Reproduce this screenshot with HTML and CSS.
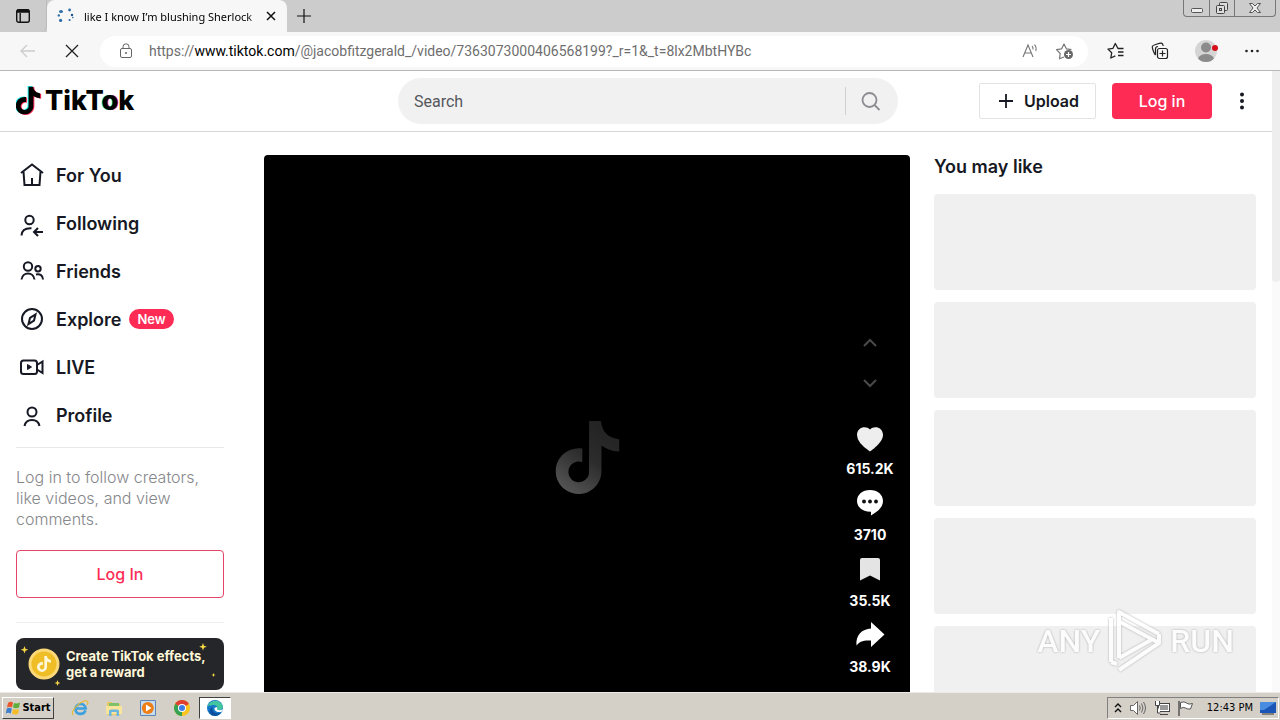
FILE: index.html
```html
<!DOCTYPE html>
<html lang="en">
<head>
<meta charset="utf-8">
<title>like I know I'm blushing Sherlock</title>
<link rel="stylesheet" href="styles.css">
</head>
<body>
<svg class="defs" aria-hidden="true">
  <symbol id="note" viewBox="0 0 24 24"><path d="M12.525.02c1.31-.02 2.61-.01 3.91-.02.08 1.53.63 3.09 1.75 4.17 1.12 1.11 2.7 1.62 4.24 1.79v4.03c-1.44-.05-2.89-.35-4.2-.97-.57-.26-1.1-.59-1.62-.93-.01 2.92.01 5.84-.02 8.75-.08 1.4-.54 2.79-1.35 3.94-1.31 1.92-3.58 3.17-5.91 3.21-1.43.08-2.86-.31-4.08-1.03-2.02-1.19-3.44-3.37-3.65-5.71-.02-.5-.03-1-.01-1.49.18-1.9 1.12-3.72 2.58-4.96 1.66-1.44 3.98-2.13 6.15-1.72.02 1.48-.04 2.96-.04 4.44-.99-.32-2.15-.23-3.02.37-.63.41-1.11 1.04-1.36 1.75-.21.51-.15 1.07-.14 1.61.24 1.64 1.82 3.02 3.5 2.87 1.12-.01 2.19-.66 2.77-1.61.19-.33.4-.67.41-1.06.1-1.79.06-3.57.07-5.36.01-4.03-.01-8.05.02-12.07z"/></symbol>
</svg>

<div class="tabstrip">
  <button class="tab-menu" aria-label="Tab actions">
    <svg width="16" height="16" viewBox="0 0 16 16" fill="none" stroke="#111" stroke-width="1.4"><rect x="1.7" y="1.7" width="12.6" height="12.6" rx="2"/><path d="M2 3.6h12M2 2.6h12" stroke-width="2.4"/><path d="M5.2 5v9"/></svg>
  </button>
  <div class="tab">
    <svg width="18" height="18" viewBox="0 0 18 18" fill="#2f6fa8"><ellipse cx="4" cy="4.5" rx="2" ry="1.5"/><circle cx="1.8" cy="8.4" r="1.2"/><circle cx="3.6" cy="13.4" r="1.6"/><circle cx="12.6" cy="3" r="1.4"/><circle cx="15" cy="8" r="1.2" fill="#1e4f86"/><circle cx="12.6" cy="13" r="1.1"/><circle cx="15.8" cy="10.6" r=".8"/></svg>
    <span class="tab-title">like I know I’m blushing Sherlock</span>
    <button class="tab-close" aria-label="Close tab"><svg width="10" height="10" viewBox="0 0 10 10" stroke="#111" stroke-width="1.5"><path d="M1 1l8 8M9 1L1 9"/></svg></button>
  </div>
  <button class="new-tab" aria-label="New tab"><svg width="16" height="16" viewBox="0 0 16 16" stroke="#111" stroke-width="1.2"><path d="M8 1v14M1 8h14"/></svg></button>
  <div class="window-buttons">
    <button class="win-btn" aria-label="Minimize"><svg width="14" height="14" viewBox="0 0 14 14" fill="#eee" stroke="#555"><rect x="1.5" y="7.5" width="11" height="4" rx="1"/></svg></button>
    <button class="win-btn" aria-label="Restore"><svg width="14" height="14" viewBox="0 0 14 14" fill="#ddd" stroke="#444"><rect x="4.500" y="1.500" width="8" height="8" rx="1"/><rect x="1.500" y="4.500" width="8" height="8" rx="1"/><rect x="4.500" y="7.500" width="2" height="2"/></svg></button>
    <button class="win-btn wide" aria-label="Close"><svg width="14" height="14" viewBox="0 0 14 14" fill="#eee" stroke="#555"><path d="M1.500 2.500h3L7 5l2.500-2.500h3L9 7l3.500 4.500h-3L7 9l-2.500 2.500h-3L5 7z"/></svg></button>
  </div>
</div>

<div class="toolbar">
  <button class="nav-btn" aria-label="Back"><svg width="16" height="16" viewBox="0 0 16 16" fill="none" stroke="#ccc" stroke-width="1.300"><path d="M15 8H1M7 2L1 8l6 6"/></svg></button>
  <button class="nav-btn" aria-label="Stop"><svg width="14" height="14" viewBox="0 0 14 14" stroke="#222" stroke-width="1.300"><path d="M1 1l12 12M13 1L1 13"/></svg></button>
  <div class="address">
    <svg width="14" height="16" viewBox="0 0 14 16" fill="none" stroke="#666"><rect x="1.500" y="5.500" width="11" height="9" rx="1.500"/><path d="M4 5.500V3.800a3 3 0 0 1 6 0v1.700"/><circle cx="7" cy="10" r=".6" fill="#666"/></svg>
    <a class="url" href="#">https://<b>www.tiktok.com</b>/@jacobfitzgerald_/video/7363073000406568199?_r=1&amp;_t=8lx2MbtHYBc</a>
    <button aria-label="Read aloud"><svg width="18" height="18" viewBox="0 0 18 18" fill="none" stroke="#777" stroke-width="1.100"><path d="M2 15L7 3l5 12M4 11h6M11 4c1 1 1.200 2 1 3.500M13.500 2.500c1.700 2 2 4 1.200 6.500"/></svg></button>
    <button aria-label="Add to favorites"><svg width="20" height="20" viewBox="0 0 20 20" fill="none" stroke="#777" stroke-width="1.200" stroke-linejoin="round"><path d="M9 16l-4.500 1.800.7-5.300L1.500 8.700l5-.8L9 3l2.500 4.900 5 .8"/><circle cx="13.500" cy="13.500" r="4.500" fill="#666" stroke="none"/><path d="M13.500 11v5M11 13.500h5" stroke="#fff"/></svg></button>
  </div>
  <div class="tools">
    <button aria-label="Favorites"><svg width="20" height="20" viewBox="0 0 20 20" fill="none" stroke="#222" stroke-width="1.300" stroke-linejoin="round"><path d="M17.500 7.500H12L9.300 2.500 7 7.300l-5 .8 3.700 3.700-.9 5.200 4.500-2.200M12 11h5.500M12 14.500h5.500"/></svg></button>
    <button aria-label="Collections"><svg width="20" height="20" viewBox="0 0 20 20" fill="none" stroke="#222" stroke-width="1.200"><rect x="7.500" y="7.500" width="10" height="10" rx="2"/><path d="M12.500 9.500v6M9.500 12.500h6M5.500 14C4 12.500 2 7 2.300 5.500 2.500 4 10 2 11.500 2.200 12.700 2.500 13 3.500 13.200 5M5.500 14V8q0-2.500 2.500-2.500"/></svg></button>
    <button aria-label="Account"><svg width="26" height="24" viewBox="0 0 26 24"><circle cx="12" cy="12" r="11" fill="#d5d5d5"/><circle cx="12" cy="8.500" r="5" fill="#8b8b8b"/><path d="M4 19.500q2-4.500 8-4.500t8 4.500q-3 3.500-8 3.500t-8-3.500z" fill="#8b8b8b"/><circle cx="21" cy="9" r="3" fill="#d60f1c"/></svg></button>
    <button aria-label="Settings"><svg width="16" height="16" viewBox="0 0 16 16" fill="#222"><circle cx="2.500" cy="8" r="1.300"/><circle cx="8" cy="8" r="1.300"/><circle cx="13.500" cy="8" r="1.300"/></svg></button>
  </div>
</div>

<div class="page">
  <div class="site">
    <header class="header">
      <a class="logo" href="#" aria-label="TikTok home">
        <svg width="27" height="32" viewBox="0 0 27 32"><use href="#note" x="-3" y="1" width="28" height="28" fill="#25f4ee"/><use href="#note" x="-1" y="2" width="28" height="28" fill="#fe2c55"/><use href="#note" x="-2" y="1.500" width="28" height="28"/></svg>
        <span class="wordmark">TikT<span class="wordmark-o">o</span>k</span>
      </a>
      <form class="search">
        <input type="search" placeholder="Search" aria-label="Search">
        <button type="button" aria-label="Search"><svg width="24" height="24" viewBox="0 0 24 24" fill="none" stroke="#8c8c91" stroke-width="1.800"><circle cx="9.500" cy="11" r="7"/><path d="M14.500 16l5 5"/></svg></button>
      </form>
      <div class="header-actions">
        <button class="upload"><svg width="14" height="14" viewBox="0 0 14 14" stroke="#161823" stroke-width="1.800"><path d="M7 0v14M0 7h14"/></svg>Upload</button>
        <button class="login">Log in</button>
        <button class="more" aria-label="More"><svg width="20" height="20" viewBox="0 0 20 20" fill="#161823"><circle cx="10" cy="3.500" r="2"/><circle cx="10" cy="10" r="2"/><circle cx="10" cy="16.500" r="2"/></svg></button>
      </div>
    </header>

    <div class="content">
      <aside class="sidebar">
        <nav class="menu">
          <a href="#"><svg viewBox="0 0 32 32"><path d="M5 14L16 5.500 27 14M7.500 12.500L8.500 26h15l1-13.500M16 19v7"/></svg>For You</a>
          <a href="#"><svg viewBox="0 0 32 32"><circle cx="13.500" cy="13" r="4.200"/><path d="M5.500 28.500c.3-5.500 4-7.500 10-7.200M27 25h-8.500M22 21l-4 4 4 4"/></svg>Following</a>
          <a href="#"><svg viewBox="0 0 32 32"><circle cx="12" cy="11.500" r="4.200"/><circle cx="22" cy="13.800" r="2.700"/><path d="M5.500 24.500c1-8 12-8 13 0M20 19.500c4-1 7 1 7 5"/></svg>Friends</a>
          <a href="#"><svg viewBox="0 0 32 32"><circle cx="16" cy="16" r="10"/><path d="M19.500 11.500l-1.500 6-5.500 3.500 1.500-6z"/></svg>Explore<span class="badge">New</span></a>
          <a href="#"><svg viewBox="0 0 32 32"><rect x="5" y="9.500" width="16" height="13.500" rx="2.500"/><path d="M21 14l5.500-3.500v11.500L21 18.500"/><path d="M11.500 13.500v5l4-2.500z" fill="#161823" stroke-width="1"/></svg>LIVE</a>
          <a href="#"><svg viewBox="0 0 32 32"><circle cx="16" cy="13" r="4.500"/><path d="M8.500 27c1.500-8 13.500-8 15 0"/></svg>Profile</a>
        </nav>
        <section class="follow">
          <p>Log in to follow creators, like videos, and view comments.</p>
          <button>Log In</button>
        </section>
        <section class="effects">
          <a href="#">
            <svg width="208" height="52" viewBox="0 0 208 52" aria-hidden="true">
              <circle cx="28" cy="26" r="15.500" fill="#fbd978"/><circle cx="28" cy="26" r="12.500" fill="#efbd25"/>
              <use href="#note" x="20" y="18" width="16" height="16" fill="#fff8d8"/>
              <g fill="#f8d745"><path d="M8.500 8l1 2.800 2.800 1-2.800 1-1 2.800-1-2.800-2.800-1 2.800-1zM187 5l1 2.800 2.800 1-2.800 1-1 2.800-1-2.800-2.800-1 2.800-1zM41.500 42l.8 2.200 2.200.8-2.200.8-.8 2.200-.8-2.200-2.200-.8 2.200-.8zM197.500 35l.6 1.400 1.400.6-1.400.6-.6 1.400-.6-1.400-1.400-.6 1.400-.6z"/></g>
            </svg>
            <span>Create TikTok effects,<br>get a reward</span>
          </a>
        </section>
      </aside>

      <main class="video">
        <svg class="placeholder" width="73" height="73" viewBox="0 0 24 24"><defs><linearGradient id="fade" x1="0.800" y1="0" x2="0.200" y2="1"><stop offset="0" stop-color="#222"/><stop offset=".5" stop-color="#2c2c2c"/><stop offset="1" stop-color="#555"/></linearGradient></defs><use href="#note" width="24" height="24" fill="url(#fade)"/></svg>
        <div class="rail">
          <button class="step" aria-label="Previous video"><svg width="16" height="16" viewBox="0 0 16 16"><path d="M2 11l6-6 6 6"/></svg></button>
          <button class="step" aria-label="Next video"><svg width="16" height="16" viewBox="0 0 16 16"><path d="M2 5l6 6 6-6"/></svg></button>
          <button class="action first"><svg width="32" height="32" viewBox="0 0 32 32" fill="#eee"><path d="M16 28.500Q3 20 3 12c0-8 9-10 13-5.500 4-4.500 13-2.500 13 5.500 0 8-13 16.500-13 16.500z"/></svg>615.2K</button>
          <button class="action"><svg width="32" height="32" viewBox="0 0 32 32" fill="#fff"><path d="M16 1c7.500 0 13 4.500 13 11 0 6.500-6 11-12 14.500v-3.700C9 23 3 18.500 3 12 3 5.500 8.500 1 16 1z"/><g fill="#111"><circle cx="10" cy="12.500" r="1.900"/><circle cx="16" cy="12.500" r="1.900"/><circle cx="22" cy="12.500" r="1.900"/></g></svg>3710</button>
          <button class="action"><svg width="32" height="32" viewBox="0 0 32 32" fill="#e4e4e4"><path d="M8 3h16q2 0 2 2v20.500l-10-5-10 5V5q0-2 2-2z"/></svg>35.5K</button>
          <button class="action"><svg width="32" height="32" viewBox="0 0 32 32" fill="#fff"><path d="M17 1l13.500 12.500L17 26v-6.500C9 19 5 21 2.500 24.500 1.500 14 8 8 17 7.500z"/></svg>38.9K</button>
        </div>
      </main>

      <aside class="related">
        <h2>You may like</h2>
        <div class="skeleton"></div>
        <div class="skeleton"></div>
        <div class="skeleton"></div>
        <div class="skeleton"></div>
        <div class="skeleton"></div>
      </aside>
    </div>
  </div>
  <div class="scrollbar"><div class="thumb"></div></div>
  <div class="watermark">
    <span>ANY</span>
    <svg width="60" height="66" viewBox="0 0 60 66" fill="none" stroke="#fff" stroke-width="4" stroke-linejoin="round"><path d="M14 50V4l40 22M15 14l39 21M14 50l32-18M6 10v44M14 62l40-27v-9M6 54l6 2"/></svg>
    <span>RUN</span>
  </div>
</div>

<footer class="taskbar">
  <button class="start"><svg width="16" height="16" viewBox="0 0 16 16"><path d="M3 3q2.500-2 5-.5L7 7.500Q4.500 6 2 7.500z" fill="#e8562a"/><path d="M9 3q2.500 1 6-.5l-1 5q-3 1.500-6 0z" fill="#5fae3b"/><path d="M1.800 8.500q2.500-1.500 5 0l-1 5q-2.500-1.500-5 0z" fill="#3f7fd0"/><path d="M8 9q3 1.200 6 0l-1 5q-3 1.200-6-.5z" fill="#f4bc28"/></svg>Start</button>
  <div class="apps">
    <button aria-label="Internet Explorer"><svg width="18" height="18" viewBox="0 0 18 18" fill="none"><path d="M14.500 11.500c-2 5-10 4.500-10-1.500s9.500-7 10.200-.5H5" stroke="#3ba0dd" stroke-width="2.600"/><path d="M2 16C-1 12 10 1 16 2c1.500.5 1 2.500 0 4" stroke="#e6b93c" stroke-width="1.200"/></svg></button>
    <button aria-label="Explorer"><svg width="18" height="18" viewBox="0 0 18 18"><path d="M2 3h5l1 2h7v11H2z" fill="#e8c964"/><path d="M4 4h10v4H4z" fill="#7fc06b"/><path d="M1 7h16v8H1z" fill="#f8e49a"/><path d="M4 17v-5q0-1.500 2-1.500h6q2 0 2 1.500v5h-2.500v-4h-5v4z" fill="#6cb6dd"/></svg></button>
    <button aria-label="Media Player"><svg width="18" height="18" viewBox="0 0 18 18"><path d="M1.500 1.500h15v15h-15z" fill="#c8dcee" stroke="#5a87b8"/><circle cx="8.800" cy="9" r="6" fill="#ee7f16"/><path d="M7 5.500v7L12.500 9z" fill="#fff"/></svg></button>
    <button aria-label="Chrome"><svg width="18" height="18" viewBox="0 0 18 18"><circle cx="9" cy="9" r="8" fill="#f9c51d"/><path d="M9 9L2.100 5a8 8 0 0 1 13.800 0z" fill="#df3f32"/><path d="M9 9L9 17A8 8 0 0 1 2.100 5z" fill="#35a152"/><circle cx="9" cy="9" r="4" fill="#fff"/><circle cx="9" cy="9" r="3" fill="#3c7de6"/></svg></button>
    <button class="active" aria-label="Edge"><svg width="18" height="18" viewBox="0 0 18 18"><circle cx="9" cy="9" r="8" fill="#1677c9"/><path d="M1.200 8C3 .5 14-1 16.800 7c.8 3.500-3 5-6 3.500 1.500-2.500-.5-5-4-4.500S2 7 1.200 8z" fill="#43c5a0"/><path d="M6.500 8c-1 3.500 2 7.500 8 6-2 3-7 4-9.500 1.500S3.500 9.500 6.500 8z" fill="#0c4f9c"/><path d="M8.500 9c-.5 3 3 5 7.500 3.500l1-2.500c-2 1.500-4.500 1.500-6 .5.500-1 .3-2-.5-2.500z" fill="#fff"/></svg></button>
  </div>
  <div class="tray">
    <svg width="8" height="12" viewBox="0 0 8 12" fill="none" stroke="#111" stroke-width="1.400"><path d="M1 5l3-3 3 3M1 10l3-3 3 3"/></svg>
    <svg width="18" height="16" viewBox="0 0 18 16" fill="none" stroke="#666"><path d="M1.500 5.500h3l4-4v13l-4-4h-3z" fill="#fff"/><path d="M10.500 5.500q1.500 2.500 0 5M12.500 3.500q3 4.500 0 9M14.500 2q4 6 0 12"/></svg>
    <svg width="16" height="16" viewBox="0 0 16 16" fill="#fff" stroke="#444"><rect x="4.500" y="3.500" width="11" height="8"/><path d="M6 5h8v5H6z" fill="#999" stroke="none"/><path d="M6 14.500h8M1.500 1v4.500h4V1M3.500 6v7h3"/></svg>
    <svg width="18" height="16" viewBox="0 0 18 16" fill="#fff" stroke="#555"><path d="M3.500 2.500q4-1.500 6 .5t6 .5L13.500 9q-3 .5-5-1t-5 .5z"/><path d="M2 1v15" stroke-width="1.500"/></svg>
    <time>12:43 PM</time>
    <svg width="16" height="14" viewBox="0 0 16 14"><rect y="1" width="16" height="11" fill="#1b55b5"/><path d="M0 1h16L4 9H0z" fill="#4a8ce0"/><path d="M2 13h12" stroke="#333"/></svg>
  </div>
</footer>
</body>
</html>
```
FILE: styles.css
```css
* { box-sizing: border-box; }
body {
  margin: 0;
  height: 100vh;
  display: flex;
  flex-direction: column;
  overflow: hidden;
  background: #fff;
  color: #161823;
  font-family: Inter, "Liberation Sans", sans-serif;
}
button {
  display: flex;
  align-items: center;
  justify-content: center;
  padding: 0;
  border: 0;
  background: none;
  color: inherit;
  font: inherit;
}
a { color: inherit; text-decoration: none; }
svg { display: block; flex: none; }
.defs { position: absolute; width: 0; height: 0; }

/* Browser tabs */
.tabstrip {
  display: flex;
  align-items: stretch;
  flex: none;
  height: 32px;
  background: #ccc;
  font-family: "Noto Sans", "Open Sans", sans-serif;
}
.tab-menu { width: 47px; border-right: 1px solid #bbb; border-bottom-right-radius: 6px; }
.tab {
  display: flex;
  align-items: center;
  width: 240px;
  padding: 0 10px;
  background: #f7f7f7;
  border-radius: 8px 8px 0 0;
}
.tab-title {
  flex: 1;
  margin-left: 9px;
  overflow: hidden;
  white-space: nowrap;
  font-size: 11px;
  color: #000;
  mask-image: linear-gradient(to right, #000 94%, #0006);
}
.tab-close { width: 12px; margin-left: 8px; }
.new-tab { width: 34px; }
.window-buttons {
  display: flex;
  height: 17px;
  margin: 0 4px 0 auto;
  border: 1px solid #777;
  border-top: 0;
  border-radius: 0 0 4px 4px;
}
.win-btn { width: 25px; }
.win-btn + .win-btn { border-left: 1px solid #777; }
.win-btn.wide { width: 41px; }

/* Browser toolbar */
.toolbar {
  display: flex;
  align-items: center;
  flex: none;
  height: 39px;
  padding: 0 12px 0 6px;
  background: #f7f7f7;
  border-bottom: 1px solid #b8b8b8;
}
.nav-btn { width: 44px; height: 32px; }
.address {
  display: flex;
  align-items: center;
  flex: 1;
  gap: 16px;
  min-width: 0;
  height: 31px;
  margin-left: 6px;
  padding: 0 13px 0 19px;
  background: #fff;
  border-radius: 16px;
}
.url {
  flex: 1;
  overflow: hidden;
  white-space: nowrap;
  font-family: Roboto, "Open Sans", sans-serif;
  font-size: 14px;
  color: #6e6e6e;
}
.url b { font-weight: 400; color: #000; }
.tools {
  display: flex;
  align-items: center;
  gap: 24px;
  padding: 0 8px 0 18px;
}

/* Site */
.page { position: relative; display: flex; flex: 1; min-height: 0; overflow: hidden; }
.site { flex: 1; min-width: 0; }
.scrollbar { flex: none; width: 8px; background: #fafafa; }
.thumb { height: 211px; background: #eee; border-radius: 0 0 4px 4px; }
.header {
  display: grid;
  grid-template-columns: 382fr 500fr 358fr;
  align-items: center;
  height: 61px;
  padding: 0 16px;
  border-bottom: 1px solid #d8d8d8;
}
.logo { display: flex; align-items: center; gap: 2px; }
.wordmark { font-size: 27px; font-weight: 800; line-height: 32px; color: #000; }
.wordmark-o { text-shadow: -1px 0 #25f4ee, 1px 0 #fe2c55; }
.search {
  display: flex;
  align-items: center;
  height: 46px;
  background: #f1f1f2;
  border-radius: 23px;
}
.search input {
  flex: 1;
  min-width: 0;
  padding: 0 16px;
  border: 0;
  outline: 0;
  background: none;
  font-family: Roboto, sans-serif;
  font-size: 16px;
  color: #161823;
}
.search input::placeholder { color: #55565c; }
.search button { width: 53px; height: 28px; border-left: 1px solid #d0d0d3; }
.header-actions { display: flex; align-items: center; justify-content: flex-end; gap: 16px; }
.upload {
  gap: 11px;
  width: 117px;
  height: 36px;
  padding-left: 3px;
  border: 1px solid #e3e3e4;
  border-radius: 2px;
  font-size: 16px;
  font-weight: 600;
}
.login {
  width: 100px;
  height: 36px;
  border-radius: 4px;
  background: #fe2c55;
  color: #fff;
  font-size: 16px;
  font-weight: 500;
}
.more { width: 28px; height: 36px; }

.content { display: flex; align-items: flex-start; padding: 0 16px; }
.sidebar { flex: none; width: 208px; padding-top: 19px; }
.menu a {
  display: flex;
  align-items: center;
  gap: 8px;
  height: 48px;
  font-size: 18px;
  font-weight: 600;
}
.menu svg {
  width: 32px;
  height: 32px;
  fill: none;
  stroke: #161823;
  stroke-width: 2;
}
.badge {
  padding: 0 8px;
  border-radius: 10px;
  background: #fe2c55;
  color: #fff;
  font-size: 13px;
  font-weight: 600;
  line-height: 20px;
}
.follow {
  margin-top: 8px;
  padding: 19px 0 24px;
  border-top: 1px solid #e8e8e9;
}
.follow p {
  margin: 0 0 20px;
  color: #86878b;
  font-size: 16px;
  font-weight: 300;
  line-height: 21px;
}
.follow button {
  width: 100%;
  height: 48px;
  border: 1px solid #e8446a;
  border-radius: 4px;
  color: #fe2c55;
  font-size: 16px;
  font-weight: 500;
}
.effects { padding-top: 15px; border-top: 1px solid #efeff0; }
.effects a {
  display: grid;
  background: #242629;
  border-radius: 8px;
  color: #fff8d9;
  font-size: 13px;
  font-weight: 700;
  line-height: 16px;
}
.effects svg, .effects span { grid-area: 1 / 1; }
.effects span { align-self: center; padding-left: 50px; }

.video {
  position: relative;
  display: flex;
  align-items: center;
  justify-content: center;
  flex: 1;
  height: 605px;
  margin: 23px 24px 0 40px;
  background: #000;
  border-radius: 4px;
}
.rail {
  position: absolute;
  top: 168px;
  right: 12px;
  display: flex;
  flex-direction: column;
  align-items: center;
  width: 56px;
  color: #fff;
}
.step { height: 40px; }
.step svg { fill: none; stroke: #4a4a4a; stroke-width: 2; }
.action {
  flex-direction: column;
  gap: 6px;
  margin-top: 12px;
  font-size: 14px;
  font-weight: 700;
  line-height: 16px;
}
.action.first { margin-top: 20px; }

.related { flex: none; width: 322px; padding-top: 23px; }
.related h2 { margin: 0 0 15px; font-size: 18px; font-weight: 600; line-height: 24px; }
.skeleton { height: 96px; margin-bottom: 12px; background: #f0f0f0; border-radius: 4px; }

.watermark {
  position: absolute;
  right: 46px;
  bottom: 18px;
  display: flex;
  align-items: center;
  gap: 5px;
  color: #fff;
  font-family: "Liberation Sans Narrow", "Roboto", sans-serif;
  font-size: 32px;
  font-weight: 500;
  filter: drop-shadow(0 0 1px #999);
  opacity: .8;
}

/* Taskbar */
.taskbar {
  display: flex;
  align-items: center;
  flex: none;
  height: 28px;
  padding: 3px 1px 1px 2px;
  background: #d4d0c8;
  border-top: 1px solid #eceae6;
  font-family: "DejaVu Sans Condensed", "DejaVu Sans", sans-serif;
  font-size: 11px;
  color: #000;
}
.start {
  gap: 1px;
  width: 52px;
  height: 22px;
  border: 1px solid;
  border-color: #fff #404040 #404040 #fff;
  font-weight: 700;
}
.apps { display: flex; align-items: center; margin-left: 9px; }
.apps button { width: 34px; height: 22px; }
.apps .active { width: 32px; border: 1px solid; border-color: #404040 #fff #fff #404040; background: #fff; }
.tray {
  display: flex;
  align-items: center;
  gap: 7px;
  height: 22px;
  margin-left: auto;
  padding: 0 2px 0 6px;
  border: 1px solid;
  border-color: #808080 #fff #fff #808080;
}
.tray time { margin-left: 5px; }
```
